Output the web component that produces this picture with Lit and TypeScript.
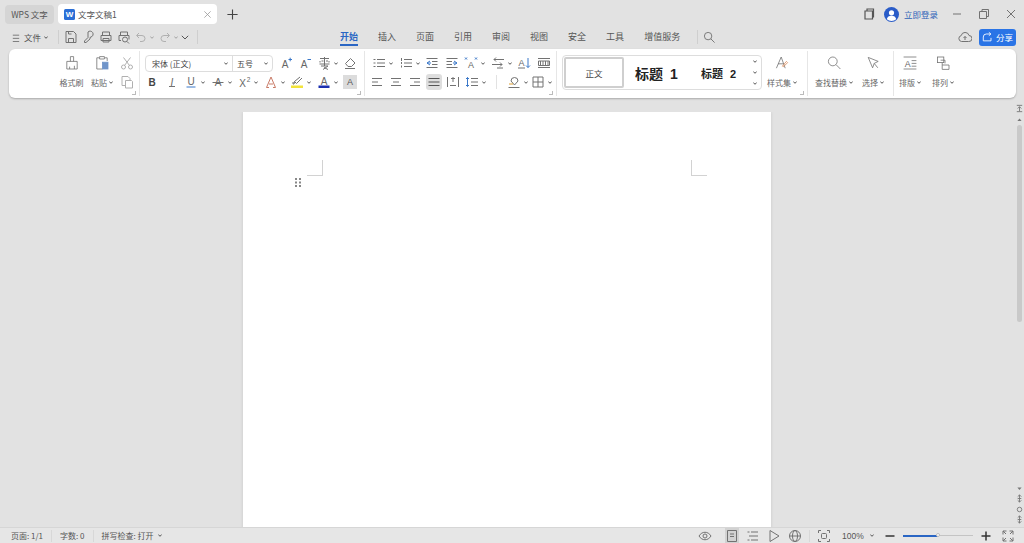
import { LitElement, html, css, svg } from "lit";
import { customElement } from "lit/decorators.js";

const BLUE = "#3b78c9";
const INK = "#727272";
const ic = (body: unknown, size = 14, vb = 14) =>
  html`<svg class="ic" width=${size} height=${size} viewBox="0 0 ${vb} ${vb}" fill="none" stroke=${INK} stroke-width="1">${body}</svg>`;
const p = (d: string, c?: string, w?: number) => svg`<path d=${d} stroke=${c ?? INK} stroke-width=${w ?? 1}></path>`;
const t = (s: string, x: number, y: number, fs = 10, weight = "400", style = "normal", c = "#666") =>
  svg`<text x=${x} y=${y} font-size=${fs} font-weight=${weight} font-style=${style} fill=${c} stroke="none" text-anchor="middle" font-family="Liberation Sans">${s}</text>`;
const chev = html`<svg class="chev" width="4" height="3" viewBox="0 0 4 3" fill="none" stroke="#555"><path d="M.3 .5L2 2.300 3.700 .5"></path></svg>`;
const wc = (i: unknown) => html`<span class="wc">${i}${chev}</span>`;

const icons = {
  menu: ic(p("M2 3.500h7M2 7h7M2 10.500h7"), 10, 11),
  save: ic(p("M2 1.500h7.500l2.500 2.500v8.500H2zM4.500 12.500V8.500h5v4M4.500 1.500v2.500h3")),
  key: ic(p("M6 2a3 3 0 1 1 3 5l-1 .5V9L4 12.500H2.500V11L6 7.500z")),
  print: ic(p("M3.500 5V2h7v3M2 5.500h10v5H2zM4 8.500h6v3.500H4z")),
  preview: ic(svg`${p("M3.500 5V2h7v3M2 5.500h10v4M2 5.500v5h2")}<circle cx="8" cy="9.500" r="2.500"></circle>${p("M10 11.500l2 2")}`),
  undo: ic(p("M5 3L2.500 5.500 5 8M3 5.500h5a3 3 0 0 1 0 6H6", "#b0b0b0")),
  redo: ic(p("M9 3l2.500 2.500L9 8M11 5.500H6a3 3 0 0 0 0 6h2", "#b0b0b0")),
  down: html`<svg width="8" height="5" viewBox="0 0 8 5" fill="none" stroke="#555"><path d="M.8 .8L4 4l3.200-3.200"></path></svg>`,
  search: ic(svg`<circle cx="5.500" cy="5.500" r="4"></circle>${p("M8.500 8.500l4 4")}`, 13),
  cloud: ic(p("M4 11.500H3.500a3 3 0 0 1-.3-5.900A4 4 0 0 1 11 5.500a3 3 0 0 1 0 6h-.5M4 11.500h6.500M7 10V6.500M5.500 8L7 6.500 8.500 8")),
  share: ic(p("M9.500 3.500H5A3.500 3.500 0 0 0 1.500 7v4.500h9V8M8 1.500l2.500 2L8 5.500", "#fff"), 12),
  brush: ic(p("M8 2h4v6M8 2v6M3.500 8h13v3M3.500 8v9.500h13V11M7 17.500v-3M13 17.500v-4"), 20, 20),
  paste: ic(svg`${p("M6.500 3.500H3.500v14h7M13.500 3.500h3v4M7 2h6v3H7z")}<rect x="10.500" y="9" width="7" height="8.500" fill="#6f94c9" stroke="#6f94c9"></rect>`, 20, 20),
  cut: ic(svg`<circle cx="3.500" cy="11" r="2" stroke="#b0b0b0"></circle><circle cx="10.500" cy="11" r="2" stroke="#b0b0b0"></circle>${p("M4.500 9.500L10.500 1.500M9.500 9.500L3.500 1.500", "#b0b0b0")}`),
  copy: ic(p("M2 1.500h6l2 2V6M2 1.500v9h3M5.500 5.500h6l1 1v6.500h-7z", "#b0b0b0")),
  aPlus: ic(svg`${t("A", 6, 11.500, 10)}${p("M9.500 3.500h3.500M11.200 1.700v3.600", BLUE)}`),
  aMinus: ic(svg`${t("A", 6, 11.500, 10)}${p("M9.500 3.500h3.500", BLUE)}`),
  pinyin: ic(p("M3 2.500h9M7.500 1v9M3 5v1.500M12 5v1.500M4.500 5h2M9 5h2M2.500 8h10M4 10h7l-5 3.500M7 11.500l4 2")),
  eraser: ic(p("M2.500 7.500l5-5 4.500 4.500-3.500 3.500H5zM2 12.500h10")),
  B: ic(t("B", 7, 11, 10, "700", "normal", "#444")),
  I: ic(svg`${t("I", 7, 10.500, 10, "400", "italic")}${p("M4 11.500h6")}`),
  U: ic(svg`${t("U", 7, 9.500, 10)}${p("M2.500 12h9", BLUE)}`),
  strike: ic(svg`${t("A", 7, 11, 10)}${p("M1.500 7.500h11")}`),
  sup: ic(svg`${t("X", 5.500, 12, 10)}${t("2", 11.500, 6.500, 6.500)}`),
  effect: ic(p("M7 2L2.500 12.500h2.500M7 2l4.500 10.500H9M5 9h4", "#c97a66")),
  highlight: ic(svg`${p("M3.500 9.500l1-3L10 2M4.500 6.500l2 2L12 3M2 8h3")}<rect x="1" y="10.500" width="12" height="2.500" fill="#f2e33c" stroke="none"></rect>`),
  color: ic(svg`${t("A", 7, 9.500, 10)}<rect x="1.500" y="10.500" width="11" height="2.500" fill="#1a2fb0" stroke="none"></rect>`),
  bullets: ic(p("M5 3.500h8M5 7h8M5 10.500h8M1.500 3.500h2M1.500 7h2M1.500 10.500h2")),
  numbers: ic(p("M5 3.500h8M5 7h8M5 10.500h8M2.500 2v3M2.500 6v2M2.500 9.500v2")),
  outdent: ic(svg`${p("M1.500 2.500h11M7 5.500h5.500M7 8.500h5.500M1.500 11.500h11")}${p("M5 5L2 7l3 2M2 7h4", BLUE)}`),
  indent: ic(svg`${p("M1.500 2.500h11M1.500 5.500h5.500M1.500 8.500h5.500M1.500 11.500h11")}${p("M9 5l3 2-3 2M12 7H8", BLUE)}`),
  textdir: ic(svg`${t("A", 7, 12, 9)}${p("M1 1.500l2 2M3 1.500l-2 2M13 1.500l-2 2M11 1.500l2 2", BLUE)}`),
  swap: ic(p("M3 3.500h10M5 1.500l-2 2 2 2M11 8.500H1M9 6.500l2 2-2 2M6 12h6")),
  sort: ic(svg`${t("A", 4.500, 10, 9)}${p("M1 12h7")}${p("M11 2v9.500M9 9.500l2 2 2-2", BLUE)}`),
  tbl: ic(p("M1 2.500h12M1 11.500h12M1.500 5h11v4.500h-11zM3.500 5v4.500M6 5v4.500M8.500 5v4.500M11 5v4.500")),
  al: ic(p("M2 3.500h10M2 7h6M2 10.500h10")),
  ac: ic(p("M2 3.500h10M4 7h6M2 10.500h10")),
  ar: ic(p("M2 3.500h10M6 7h6M2 10.500h10")),
  aj: ic(p("M1.500 3.500h11M1.500 7h11M1.500 10.500h11", "#555")),
  dist: ic(p("M1.500 2v10M12.500 2v10M4 10.500h6M5 3.500h4M7 2v5")),
  spacing: ic(svg`${p("M6 3.500h7M6 7h7M6 10.500h7")}${p("M2.500 2.500v9M1 4L2.500 2.500 4 4M1 10l1.500 1.500L4 10", BLUE)}`),
  shade: ic(svg`${p("M4 6a3.500 3.500 0 1 1 7 0L7.500 10zM1.500 12.500h11")}${p("M2 9h4", "#e0a030")}`),
  border: ic(p("M2 2h10v10H2zM7 2v10M2 7h10")),
  stylesSet: ic(svg`${p("M3 16.500L9 2.500l5 14M5 11h7")}${p("M10.500 14l5-6 1.500 1.500-5 5z", "#d98a5a")}`, 20, 20),
  bigSearch: ic(svg`<circle cx="8.500" cy="8" r="5.500"></circle>${p("M12.500 12l5.500 5.500")}`, 20, 20),
  select: ic(p("M4 3l12.500 5-5 2.500L9.500 16zM11.500 10.500l4.500 5.500"), 20, 20),
  layout: ic(svg`${p("M2 2.500h16M2 17.500h16M12 7h6M12 10.500h6M12 14h6")}${t("A", 7, 15, 11)}`, 20, 20),
  arrange: ic(svg`<rect x="3" y="2.500" width="8" height="7"></rect>${p("M7 6.500h5.500v4M9 12.500h8.500V18H9zM9 9.500v3")}`, 20, 20),
  win: ic(p("M3 4h7.500v8H3zM5 4V2h6.500v8h-1", "#555", 1.200)),
  min: ic(p("M3 7h8")),
  restore: ic(p("M2.500 4.500h7v7h-7zM5 4.500V2.500h6.500v7h-2")),
  close: ic(p("M3 3l8 8M11 3l-8 8")),
  eye: ic(svg`${p("M1 7c3-5 9-5 12 0-3 5-9 5-12 0z")}<circle cx="7" cy="7" r="2"></circle>`),
  page: ic(p("M2.500 1.500h9v11h-9zM5 5h4M5 7.500h4")),
  outline: ic(p("M1.500 3h2M5 3h7M3 7h9M1.500 11h2M5 11h7")),
  play: ic(p("M3 1.500L12 7l-9 5.500z")),
  globe: ic(svg`<circle cx="7" cy="7" r="5.500"></circle><ellipse cx="7" cy="7" rx="2.500" ry="5.500"></ellipse>${p("M1.500 7h11")}`),
  focus: ic(svg`${p("M1.500 4V1.500H4M10 1.500h2.500V4M12.500 10v2.500H10M4 12.500H1.500V10")}<rect x="4.500" y="4.500" width="5" height="5" rx="1"></rect>`),
  minus: ic(p("M2.500 7h9", "#333", 1.500)),
  plus: ic(p("M2.500 7h9M7 2.500v9", "#333", 1.500)),
  full: ic(p("M5.500 2H2v3.500M8.500 2H12v3.500M12 8.500V12H8.500M2 8.500V12h3.500M2 2l3 3M12 2L9 5M12 12L9 9M2 12l3-3")),
};

const tabs = ["开始", "插入", "页面", "引用", "审阅", "视图", "安全", "工具", "增值服务"];

@customElement("app-root")
export class AppRoot extends LitElement {
  static styles = css`
    :host { display: flex; flex-direction: column; width: 1024px; height: 543px; background: #e2e2e2; overflow: hidden;
      font: 8.500px "Noto Sans CJK SC", "Liberation Sans", sans-serif; color: #555; }
    svg { display: block; flex: none; }
    .wc { display: flex; align-items: center; width: 21px; gap: 3px; }

    .title { height: 28px; display: flex; align-items: center; padding: 0 6px 0 5px; }
    .tab-home { width: 49px; height: 19px; background: #d5d5d5; border-radius: 4px; display: flex; align-items: center; justify-content: center; }
    .tab-doc { width: 159px; height: 20px; margin-left: 4px; background: #fff; border-radius: 4px; display: flex; align-items: center; padding: 0 4px 0 6px; box-sizing: border-box; gap: 3px; }
    .wlogo { width: 11px; height: 11px; background: #2b6fd6; border-radius: 1.500px; color: #fff; font: 700 8px/11px "Liberation Sans", sans-serif; text-align: center; }
    .tab-doc .x { margin-left: auto; }
    .tab-add { margin-left: 9px; }
    .win { margin-left: auto; display: flex; align-items: center; }
    .avatar { margin-left: 8px; }
    .login { color: #2f62b8; margin-left: 5px; width: 34px; }
    .winbtns { display: flex; align-items: center; gap: 13px; margin-left: 12px; }

    .tools { height: 18px; margin-bottom: 2px; display: flex; align-items: center; padding: 0 8px 0 11px; }
    .filebtn { display: flex; align-items: center; gap: 3px; width: 47px; }
    .vsep { width: 1px; height: 14px; background: #cfcfcf; flex: none; }
    .qat { display: flex; align-items: center; gap: 3.500px; margin-left: 5px; width: 133px; }
    .hist { display: flex; align-items: center; gap: 2px; }
    .hist .chev { opacity: .45; }
    .tabs { display: flex; gap: 20px; width: 339px; }
    .qat-wrap { display: flex; align-items: center; width: 329px; }
    .tabs span { font-size: 9px; line-height: 16px; height: 17px; box-sizing: border-box; white-space: nowrap; }
    .tabs .on { color: #2a66c4; font-weight: 700; border-bottom: 2px solid #2a66c4; }
    .finder { margin-left: 18px; }
    .find-ic { margin-left: 5px; }
    .tools .right { margin-left: auto; display: flex; align-items: center; gap: 7px; }
    .sharebtn { width: 37px; height: 17px; background: #2a74e6; border-radius: 3px; color: #fff; display: flex; align-items: center; justify-content: center; gap: 2px; }

    .ribbon { margin: 1px 8px 0 9px; height: 49px; background: #fff; border-radius: 6px; box-shadow: 0 1px 2px rgba(0,0,0,.25); display: flex; flex: none; }
    .group { position: relative; flex: none; box-sizing: border-box; height: 45px; margin-top: 2px; border-right: 1px solid #e6e6e6; display: flex; color: #666; font-size: 8px; }
    .launch { position: absolute; right: 3px; bottom: 1px; width: 3px; height: 3px; border-right: 1px solid #bbb; border-bottom: 1px solid #bbb; }
    .g-clip { width: 131px; padding: 4px 0 0 47px; }
    .g-font { width: 225px; flex-direction: column; padding-top: 4px; gap: 3px; }
    .g-para { width: 192px; flex-direction: column; padding-top: 4px; gap: 3px; }
    .g-style { width: 251px; padding: 4px 0 0 5px; }
    .g-find { width: 86px; padding: 4px 0 0 3px; }
    .g-arr { width: 70px; padding-top: 4px; border: 0; gap: 1px; }
    .col { display: flex; flex-direction: column; align-items: center; height: 35px; gap: 3px; }
    .col > svg { height: 16px; }
    .col .lbl { display: flex; align-items: center; gap: 2px; height: 16px; white-space: nowrap; }
    .w31 { width: 31px; } .w30 { width: 30px; } .w20 { width: 20px; } .w40 { width: 40px; } .w46 { width: 46px; } .w32 { width: 32px; }
    .col.small { gap: 3px; }
    .r { display: flex; align-items: center; height: 16px; gap: 5px; }
    .g-font .r1 { padding-left: 5px; }
    .g-font .r2 { padding-left: 5px; gap: 5.500px; }
    .selects { display: flex; width: 128px; height: 17px; box-sizing: border-box; border: 1px solid #ddd; border-radius: 4px; margin-right: 1px; }
    .sel { display: flex; align-items: center; justify-content: space-between; padding: 0 4px 0 6px; box-sizing: border-box; color: #444; }
    .sel1 { width: 87px; border-right: 1px solid #ddd; }
    .sel2 { flex: 1; padding-left: 4px; }
    .charbox { width: 14px; height: 14px; background: #dcdcdc; color: #555; font: 9px/14px "Liberation Sans", sans-serif; text-align: center; flex: none; }
    .g-para .r1 { padding-left: 7px; gap: 5.500px; }
    .g-para .r2 { padding-left: 5px; }
    .active { background: #dedede; border-radius: 2px; box-shadow: 0 0 0 1px #dedede; }
    .rsep { width: 1px; height: 14px; background: #e2e2e2; margin: 0 5px; flex: none; }
    .pair { display: flex; gap: 3px; }

    .gallery { width: 200px; height: 35px; box-sizing: border-box; border: 1px solid #ddd; border-radius: 4px; display: flex; align-items: center; padding-left: 1px; position: relative; }
    .normal { width: 60px; height: 31px; box-sizing: border-box; border: 2px solid #cfcfcf; border-radius: 2px; display: flex; align-items: center; justify-content: center; color: #444; font-size: 8.500px; }
    .h1 { margin-left: 11px; width: 66px; font: 700 14px "Noto Sans CJK SC", sans-serif; color: #222; white-space: nowrap; }
    .h2 { font: 700 11px "Noto Sans CJK SC", sans-serif; color: #222; white-space: nowrap; }
    .h1 b, .h2 b { font-family: "Liberation Sans", sans-serif; margin-left: 7px; }
    .garrows { position: absolute; right: 4px; top: 4px; display: flex; flex-direction: column; gap: 8px; align-items: center; }

    .work { flex: 1; min-height: 0; display: flex; padding-top: 14px; }
    .stage { flex: 1; display: flex; justify-content: center; overflow: hidden; }
    .page { width: 528px; height: 440px; background: #fff; box-shadow: 0 0 3px rgba(0,0,0,.12); box-sizing: border-box; padding: 48px 64px 0; }
    .marks { display: flex; justify-content: space-between; }
    .mark { width: 16px; height: 16px; box-sizing: border-box; border-bottom: 1px solid #d2d2d2; }
    .mark.l { border-right: 1px solid #d2d2d2; }
    .mark.rr { border-left: 1px solid #d2d2d2; }
    .grip { margin: 1px 0 0 -13px; }
    .scroll { width: 10px; flex: none; display: flex; flex-direction: column; align-items: center; margin-top: -9px; }
    .scroll .g { height: 11px; display: flex; align-items: center; justify-content: center; }
    .scroll .g4 { height: 10.500px; display: flex; align-items: center; justify-content: center; }
    .thumb { width: 5px; height: 197px; background: #c9c9c9; border-radius: 3px; }
    .sb-bottom { margin-top: auto; margin-bottom: 2px; display: flex; flex-direction: column; }

    .status { height: 16px; flex: none; background: #e6e6e6; border-top: 1px solid #d6d6d6; box-sizing: border-box; display: flex; align-items: center; padding: 0 9px 0 11px; font-size: 8px; color: #555; }
    .status .sp { width: 1px; height: 12px; background: #d8d8d8; margin: 0 8px; flex: none; }
    .status .spell { display: flex; align-items: center; gap: 4px; }
    .sright { margin-left: auto; display: flex; align-items: center; align-self: stretch; }
    .cl { display: flex; align-items: center; gap: 7px; margin-left: 7px; }
    .pagebtn { align-self: stretch; width: 14px; background: #d2d2d2; display: flex; align-items: center; justify-content: center; margin-left: 13px; }
    .status .sp.sp7 { margin: 0 7px; }
    .zoomtxt { margin-left: 11px; width: 21px; white-space: nowrap; font-family: "Liberation Sans", sans-serif; font-size: 8.500px; }
    .zchev { margin: 0 9px 0 7px; }
    .slider { width: 70px; height: 1px; background: #c4c4c4; position: relative; margin: 0 6px 0 6px; }
    .fill { width: 35px; height: 1.500px; background: #2a66c4; }
    .knob { position: absolute; left: 33px; top: -2px; width: 4px; height: 4px; border-radius: 50%; background: #fff; border: 1px solid #bbb; box-sizing: border-box; }
    .fullbtn { margin-left: 8px; }
  `;

  render() {
    const title = html`<div class="title">
      <div class="tab-home">WPS 文字</div>
      <div class="tab-doc"><span class="wlogo">W</span><span>文字文稿1</span><span class="x">${ic(p("M3 3l8 8M11 3l-8 8", "#999"), 11)}</span></div>
      <span class="tab-add">${ic(p("M1.500 7h11M7 1.500v11", "#444", 1.200), 13)}</span>
      <div class="win">
        ${icons.win}
        <svg class="avatar" width="15" height="15" viewBox="0 0 15 15"><circle cx="7.500" cy="7.500" r="7.500" fill="#2a5cc8"></circle><circle cx="7.500" cy="5.800" r="2.600" fill="#fff"></circle><path d="M2.800 12.300a4.800 4.300 0 0 1 9.400 0 7 7 0 0 1-9.400 0z" fill="#fff"></path></svg>
        <span class="login">立即登录</span>
        <div class="winbtns">${icons.min}${icons.restore}${icons.close}</div>
      </div>
    </div>`;

    const tools = html`<div class="tools">
      <div class="qat-wrap">
        <div class="filebtn">${icons.menu}<span>文件</span>${chev}</div>
        <span class="vsep"></span>
        <div class="qat">
          ${icons.save}${icons.key}${icons.print}${icons.preview}
          <span class="hist">${icons.undo}${chev}</span>
          <span class="hist">${icons.redo}${chev}</span>
          ${icons.down}
        </div>
        <span class="vsep"></span>
      </div>
      <div class="tabs">${tabs.map((s, i) => html`<span class=${i === 0 ? "on" : ""}>${s}</span>`)}</div>
      <span class="vsep finder"></span>
      <span class="find-ic">${icons.search}</span>
      <div class="right">${icons.cloud}<div class="sharebtn">${icons.share}<span>分享</span></div></div>
    </div>`;

    const ribbon = html`<div class="ribbon">
      <div class="group g-clip">
        <div class="col w31">${icons.brush}<span class="lbl">格式刷</span></div>
        <div class="col w30">${icons.paste}<span class="lbl">粘贴${chev}</span></div>
        <div class="col small w20">${icons.cut}${icons.copy}</div>
        <span class="launch"></span>
      </div>
      <div class="group g-font">
        <div class="r r1">
          <div class="selects">
            <div class="sel sel1"><span>宋体 (正文)</span>${chev}</div>
            <div class="sel sel2"><span>五号</span>${chev}</div>
          </div>
          ${icons.aPlus}${icons.aMinus}${wc(icons.pinyin)}${icons.eraser}
        </div>
        <div class="r r2">
          ${icons.B}${icons.I}${wc(icons.U)}${wc(icons.strike)}${wc(icons.sup)}${wc(icons.effect)}${wc(icons.highlight)}${wc(icons.color)}<span class="charbox">A</span>
        </div>
        <span class="launch"></span>
      </div>
      <div class="group g-para">
        <div class="r r1">
          ${wc(icons.bullets)}${wc(icons.numbers)}${icons.outdent}${icons.indent}${wc(icons.textdir)}${wc(icons.swap)}${icons.sort}${icons.tbl}
        </div>
        <div class="r r2">
          ${icons.al}${icons.ac}${icons.ar}<span class="active">${icons.aj}</span>${icons.dist}
          ${wc(icons.spacing)}
          <span class="rsep"></span>
          <span class="pair">${wc(icons.shade)}${wc(icons.border)}</span>
        </div>
        <span class="launch"></span>
      </div>
      <div class="group g-style">
        <div class="gallery">
          <div class="normal">正文</div>
          <div class="h1">标题<b>1</b></div>
          <div class="h2">标题<b>2</b></div>
          <div class="garrows">${chev}${chev}${chev}</div>
        </div>
        <div class="col w40">${icons.stylesSet}<span class="lbl">样式集${chev}</span></div>
        <span class="launch"></span>
      </div>
      <div class="group g-find">
        <div class="col w46">${icons.bigSearch}<span class="lbl">查找替换${chev}</span></div>
        <div class="col w32">${icons.select}<span class="lbl">选择${chev}</span></div>
      </div>
      <div class="group g-arr">
        <div class="col w32">${icons.layout}<span class="lbl">排版${chev}</span></div>
        <div class="col w32">${icons.arrange}<span class="lbl">排列${chev}</span></div>
      </div>
    </div>`;

    const updown = ic(p("M5 1v8M3 3l2-2 2 2M3 7l2 2 2-2M3 5h4", "#777"), 9, 10);
    const work = html`<div class="work">
      <div class="stage">
        <div class="page">
          <div class="marks"><span class="mark l"></span><span class="mark rr"></span></div>
          <svg class="grip" width="8" height="11" viewBox="0 0 8 11" fill="#888">
            <rect x="1" y="1" width="2" height="2"></rect><rect x="5" y="1" width="2" height="2"></rect>
            <rect x="1" y="4.500" width="2" height="2"></rect><rect x="5" y="4.500" width="2" height="2"></rect>
            <rect x="1" y="8" width="2" height="2"></rect><rect x="5" y="8" width="2" height="2"></rect>
          </svg>
        </div>
      </div>
      <div class="scroll">
        <span class="g">${ic(p("M2 1.500h6M5 3v5M3 5l2-2 2 2M2 8.500h6", "#777"), 9, 10)}</span>
        <span class="g">${ic(svg`<path d="M5 3.500l3 3.500H2z" fill="#777" stroke="none"></path>`, 7, 10)}</span>
        <div class="thumb"></div>
        <div class="sb-bottom">
          <span class="g4">${ic(svg`<path d="M5 7L8 3.500H2z" fill="#777" stroke="none"></path>`, 7, 10)}</span>
          <span class="g4">${updown}</span>
          <span class="g4">${ic(svg`<circle cx="5" cy="5" r="2.500" stroke="#777"></circle>`, 9, 10)}</span>
          <span class="g4">${updown}</span>
        </div>
      </div>
    </div>`;

    const status = html`<div class="status">
      <span>页面: 1/1</span><span class="sp"></span>
      <span>字数: 0</span><span class="sp"></span>
      <span class="spell">拼写检查: 打开 ${chev}</span>
      <div class="sright">
        ${icons.eye}
        <span class="pagebtn">${icons.page}</span>
        <div class="cl">${icons.outline}${icons.play}${icons.globe}</div>
        <span class="sp sp7"></span>
        ${icons.focus}
        <span class="zoomtxt">100%</span>
        <span class="zchev">${chev}</span>
        ${icons.minus}
        <div class="slider"><div class="fill"></div><div class="knob"></div></div>
        ${icons.plus}
        <span class="fullbtn">${icons.full}</span>
      </div>
    </div>`;

    return html`${title}${tools}${ribbon}${work}${status}`;
  }
}
